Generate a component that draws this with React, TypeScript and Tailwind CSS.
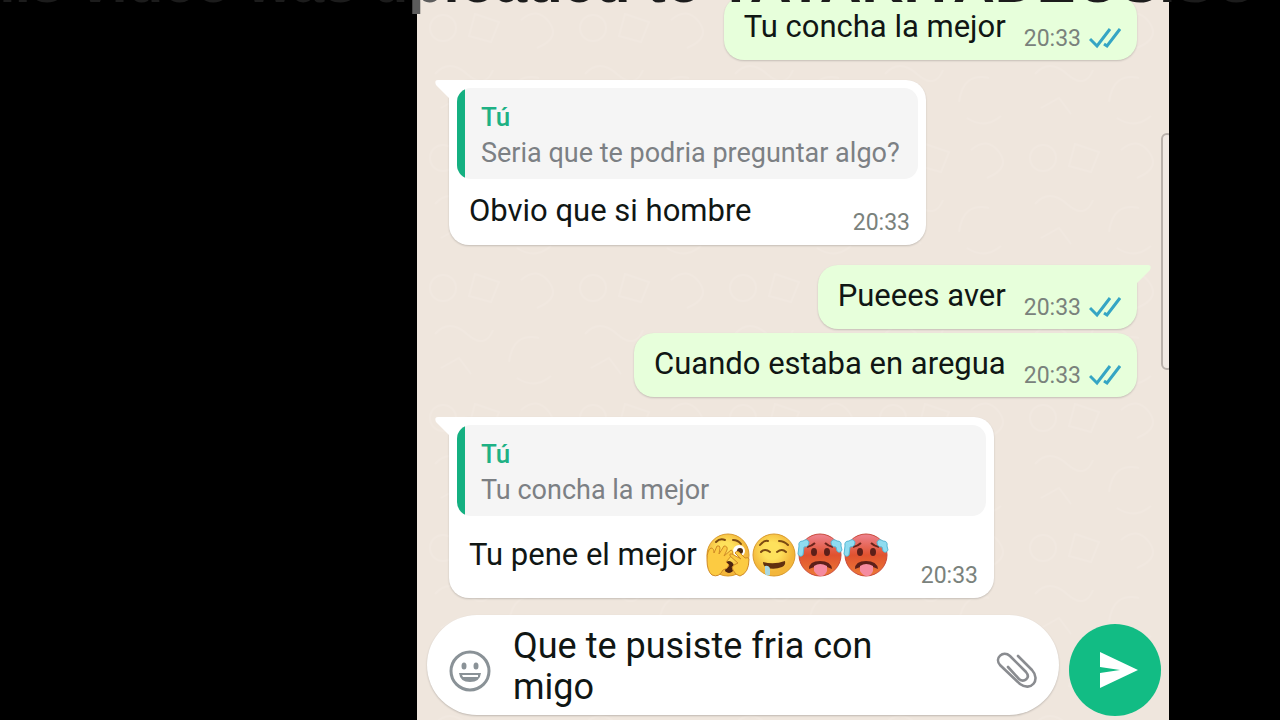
import { ReactNode } from "react";

type BubbleProps = {
  side: "in" | "out";
  tail?: boolean;
  className?: string;
  children: ReactNode;
};

function Bubble({ side, tail, className = "", children }: BubbleProps) {
  const incoming = side === "in";

  return (
    <li
      className={`relative w-fit rounded-[20px] shadow-[0_1px_2px_rgba(0,0,0,0.18)] ${
        incoming ? "ml-8 bg-white" : "mr-8 self-end bg-[#e7ffdb]"
      } ${className}`}
    >
      {tail && (
        <svg
          viewBox="0 0 34 22"
          className={`absolute top-0 h-[22px] w-[34px] ${
            incoming ? "-left-[14px] text-white" : "-right-[14px] -scale-x-100 text-[#e7ffdb]"
          }`}
          aria-hidden="true"
        >
          <path d="M3 0h31v22H14v-4L1 5Q-1 0 3 0z" fill="currentColor" />
        </svg>
      )}
      {children}
    </li>
  );
}

function Time() {
  return (
    <time dateTime="20:33" className="text-[23px] leading-7 text-[#7a827c]">
      20:33
    </time>
  );
}

function Ticks() {
  return (
    <svg
      viewBox="0 0 32 22"
      className="mb-1 ml-2 h-[22px] w-8 shrink-0"
      fill="none"
      stroke="#35a5c4"
      strokeWidth="3"
      role="img"
      aria-label="Leído"
    >
      <path d="M1 12l7 7L21 2M15 17l3 2L31 2" />
    </svg>
  );
}

function Sent({ text, tail, className }: { text: string; tail?: boolean; className?: string }) {
  return (
    <Bubble side="out" tail={tail} className={className}>
      <div className="relative flex h-16 items-end pr-4 pb-1 pl-5">
        <p className="pb-[9px] text-[31px] leading-10">{text}</p>
        <span className="ml-[18px] flex items-end pb-[3px]">
          <Time />
          <Ticks />
        </span>
      </div>
    </Bubble>
  );
}

function Quote({ text }: { text: string }) {
  return (
    <blockquote className="relative flex overflow-hidden rounded-[14px] bg-[#f5f5f5]">
      <span className="w-2 shrink-0 bg-[#14b081]" />
      <div className="pt-[11px] pr-4 pb-2 pl-4">
        <p className="text-[26px] leading-9 font-medium text-[#1eb184]">Tú</p>
        <p className="text-[27px] leading-9 text-[#7c8084]">{text}</p>
      </div>
    </blockquote>
  );
}

function Face({ hot, children }: { hot?: boolean; children: ReactNode }) {
  return (
    <svg viewBox="0 0 46 46" className="h-[46px] w-[46px]" aria-hidden="true">
      <circle cx="23" cy="23" r="21" fill={hot ? "url(#hot)" : "url(#warm)"} stroke={hot ? "#c9493b" : "#d99a2b"} />
      {children}
    </svg>
  );
}

function PeekingFace() {
  return (
    <Face>
      <path d="M11 10q4-4 9-2M28 8q5 0 8 4" stroke="#7a4a12" strokeWidth="2" fill="none" strokeLinecap="round" />
      <ellipse cx="34" cy="19" rx="6" ry="6" fill="#fff" />
      <circle cx="35" cy="19" r="3" fill="#4a2a14" />
      <ellipse cx="24" cy="35" rx="5" ry="6" fill="#4d2410" />
      <path
        d="M2 28q0-10 4-12 3 0 3 5l3-7q3-1 3 2l-1 6 5-8q4 0 3 4l-3 6 7-6q3 1 1 5l-6 7 3 3q-1 4-6 5-4 8-11 5-5-4-5-15z"
        fill="#fccb42"
        stroke="#d08a26"
        strokeLinejoin="round"
      />
      <path
        d="M44 27q0 14-9 17-5-1-7-6-2-3 1-5l4-2-8-7q-1-3 2-2l9 5-6-6q1-3 4-1l6 6q4-1 4 1z"
        fill="#fccb42"
        stroke="#d08a26"
        strokeLinejoin="round"
      />
    </Face>
  );
}

function DroolingFace() {
  return (
    <Face>
      <path
        d="M9 13q4-5 8-4M28 9q5 0 9 4M10 20q4-4 9 0M26 20q5-4 9 0"
        stroke="#7a4a12"
        strokeWidth="2"
        fill="none"
        strokeLinecap="round"
      />
      <path d="M12 30q11 3 22-1 1 4-3 6-7 3-15 1-4-2-4-6z" fill="#61300f" />
      <path d="M14 34q4-1 5 3v6q-5 2-5-3z" fill="#a9d9e3" />
    </Face>
  );
}

function HotFace() {
  return (
    <Face hot>
      <path d="M10 15q5-1 8-4M28 11q3 3 8 4" stroke="#6b241b" strokeWidth="2" fill="none" />
      <ellipse cx="17" cy="20" rx="3" ry="4" fill="#5c1f19" />
      <ellipse cx="30" cy="20" rx="3" ry="4" fill="#5c1f19" />
      <path d="M12 37q0-8 11-8t12 8q-11-6-23 0z" fill="#5c1f19" />
      <path d="M17 34q6-4 13 0v5q-2 5-6 5t-7-5z" fill="#f58ba0" />
      <path
        d="M2 14q-1-5 4-5 4-3 6 1 0 5-5 5l-1 8q-3 3-5-1zM44 14q1-5-4-5-4-3-6 1 0 5 5 5l1 4q3 3 5-1z"
        fill="#8fdcf0"
        stroke="#58b6d3"
      />
    </Face>
  );
}

function Gradients() {
  return (
    <svg className="absolute h-0 w-0" aria-hidden="true">
      <defs>
        <radialGradient id="warm" cx="45%" cy="40%">
          <stop offset="0.4" stopColor="#fee15c" />
          <stop offset="1" stopColor="#f3b63a" />
        </radialGradient>
        <linearGradient id="hot" x1="0" y1="0" x2="0" y2="1">
          <stop offset="0" stopColor="#ee8390" />
          <stop offset="0.5" stopColor="#e0522f" />
          <stop offset="1" stopColor="#ec7a35" />
        </linearGradient>
      </defs>
    </svg>
  );
}

// Faint doodles behind the chat
function Wallpaper() {
  return (
    <svg className="absolute inset-0 h-full w-full" aria-hidden="true">
      <defs>
        <pattern id="doodles" width="150" height="130" patternUnits="userSpaceOnUse">
          <g fill="none" stroke="#f5eee7" strokeWidth="2">
            <circle cx="26" cy="28" r="13" />
            <path d="M58 14l24 8-8 20-22-6zM104 20q16-14 28 2t-12 26M18 74q14-16 32 0t26-4M92 102q4-30 30-24M24 108l18-10 12 16M134 116q-16 14-34 2" />
          </g>
        </pattern>
      </defs>
      <rect width="100%" height="100%" fill="url(#doodles)" opacity="0.3" />
    </svg>
  );
}

function Composer() {
  return (
    <form
      className="relative mt-4 flex items-center gap-[10px] pr-2 pl-[10px]"
      onSubmit={(e) => e.preventDefault()}
    >
      <div className="flex h-[100px] flex-1 items-center rounded-[50px] bg-white pr-5 pl-[22px] shadow-[0_1px_2px_rgba(0,0,0,0.2)]">
        <button type="button" aria-label="Emojis" className="mt-3">
          <svg viewBox="0 0 42 42" className="h-[42px] w-[42px]" fill="none" stroke="#8a9297" strokeWidth="3">
            <circle cx="21" cy="21" r="19" />
            <ellipse cx="15" cy="16" rx="2.5" ry="3.5" fill="#8a9297" stroke="none" />
            <ellipse cx="27" cy="16" rx="2.5" ry="3.5" fill="#8a9297" stroke="none" />
            <path d="M10 23h22q-1 9-11 9t-11-9z" fill="#8a9297" stroke="none" />
            <path d="M13 25h16v2H14z" fill="#fff" stroke="none" />
          </svg>
        </button>
        <textarea
          aria-label="Mensaje"
          rows={2}
          defaultValue="Que te pusiste fria con migo"
          className="mt-2 ml-[22px] h-[86px] w-[400px] resize-none overflow-hidden text-[36px] leading-[41px] outline-none"
        />
        <button type="button" aria-label="Adjuntar" className="mt-3 ml-auto">
          <svg
            viewBox="0 0 44 40"
            className="h-10 w-11"
            fill="none"
            stroke="#8a8c90"
            strokeWidth="2.6"
            strokeLinecap="round"
          >
            <path d="M23 5l14 14c9 10-1 22-12 14L5 14C-1 7 8-1 15 5l16 16c5 6-2 11-7 7L13 16" />
          </svg>
        </button>
      </div>
      <button
        type="submit"
        aria-label="Enviar"
        className="mt-[10px] flex h-[92px] w-[92px] items-center justify-center rounded-full bg-[#12bc84]"
      >
        <svg viewBox="0 0 38 36" className="ml-2 h-9 w-[38px]" fill="#fff" aria-hidden="true">
          <path d="M0 0l38 18L0 36V21l20-3L0 15z" />
        </svg>
      </button>
    </form>
  );
}

export default function App() {
  return (
    <div className="relative grid min-h-screen grid-cols-[417fr_752fr_111fr] overflow-hidden bg-black font-[Roboto,sans-serif] text-[#101614]">
      <Gradients />
      <main className="relative col-start-2 h-screen overflow-hidden bg-[#efe6dd]">
        <Wallpaper />
        <ul className="relative -mt-1 flex flex-col">
          <Sent text="Tu concha la mejor" />
          <Bubble side="in" tail className="mt-5 min-w-[477px] px-2 pt-2 pb-1">
            <Quote text="Seria que te podria preguntar algo?" />
            <div className="flex items-end justify-between pr-2 pb-1 pl-3">
              <p className="pt-3 pb-[6px] text-[31px] leading-10">Obvio que si hombre</p>
              <Time />
            </div>
          </Bubble>
          <Sent text="Pueees aver" tail className="mt-5" />
          <Sent text="Cuando estaba en aregua" className="mt-1" />
          <Bubble side="in" tail className="mt-5 min-w-[545px] px-2 pt-2 pb-1">
            <Quote text="Tu concha la mejor" />
            <div className="flex items-end justify-between pr-2 pb-1 pl-3">
              <p className="flex items-center pt-4 pb-3 text-[31px] leading-10">
                Tu pene el mejor
                <span className="ml-2 flex">
                  <PeekingFace />
                  <DroolingFace />
                  <HotFace />
                  <HotFace />
                </span>
              </p>
              <Time />
            </div>
          </Bubble>
        </ul>
        <Composer />
        <div className="absolute top-[133px] -right-1 h-[237px] w-3 rounded-lg border-2 border-[#b9b0aa] bg-[#f1e9e3]" />
      </main>
      <p className="absolute -top-[50px] -left-14 font-['Liberation_Sans',sans-serif] text-[58px] leading-[64px] font-bold whitespace-nowrap text-[#1c1c1c]">
        This video was u<span className="text-[#5c5c5c]">p</span>loaded to YAYAKIYADEOSISO
      </p>
    </div>
  );
}
